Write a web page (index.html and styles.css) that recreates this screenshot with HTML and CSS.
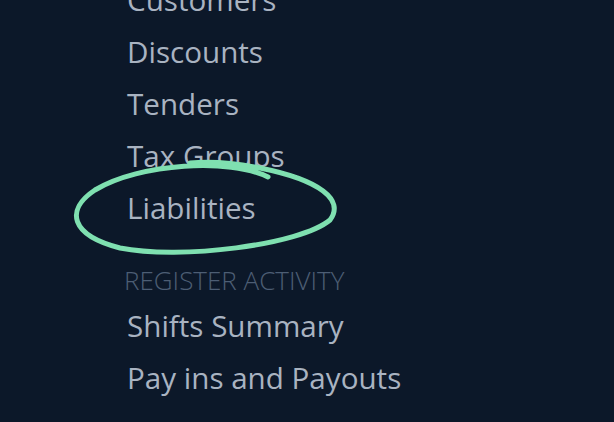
FILE: index.html
```html
<!DOCTYPE html>
<html lang="en">
<head>
<meta charset="UTF-8" />
<meta name="viewport" content="width=device-width, initial-scale=1.0"/>
<title>Settings Menu</title>
<link rel="stylesheet" href="styles.css">
</head>
<body>
  <nav class="menu">
    <ul class="menu-list">
      <li class="menu-item">Customers</li>
      <li class="menu-item">Discounts</li>
      <li class="menu-item">Tenders</li>
      <li class="menu-item">Tax Groups</li>
      <li class="menu-item">Liabilities</li>
    </ul>
    <div class="menu-heading">REGISTER ACTIVITY</div>
    <ul class="menu-list">
      <li class="menu-item">Shifts Summary</li>
      <li class="menu-item">Pay ins and Payouts</li>
    </ul>
  </nav>

  <svg class="scribble" width="614" height="422" viewBox="0 0 614 422">
    <path d="M 268 177 C 230 158, 140 163, 95 190 C 65 210, 70 235, 120 248 C 180 260, 300 245, 330 220 C 345 200, 320 180, 260 168 C 235 163, 210 161, 190 163" />
  </svg>
</body>
</html>
```

FILE: styles.css
```css
:root {
  --bg: #0c1829;
  --text: #a9b3c1;
  --muted: #4d5e74;
  --marker: #7fe0b0;
  --font: 'Open Sans', sans-serif;
}

html, body {
  margin: 0;
  height: 100%;
  overflow: hidden;
}

body {
  background: var(--bg);
  font-family: var(--font);
  position: relative;
}

.menu {
  margin-top: -26px;
  padding-left: 127px;
}

.menu-list {
  list-style: none;
  margin: 0;
  padding: 0;
}

.menu-item {
  font-size: 29.6px;
  line-height: 52px;
  color: var(--text);
}

.menu-heading {
  font-size: 26px;
  font-weight: 300;
  line-height: 30px;
  color: var(--muted);
  margin: 31px 0 5px -3px;
}

.scribble {
  position: absolute;
  top: 0;
  left: 0;
  pointer-events: none;
}

.scribble path {
  fill: none;
  stroke: var(--marker);
  stroke-width: 5;
  stroke-linecap: round;
}
```
